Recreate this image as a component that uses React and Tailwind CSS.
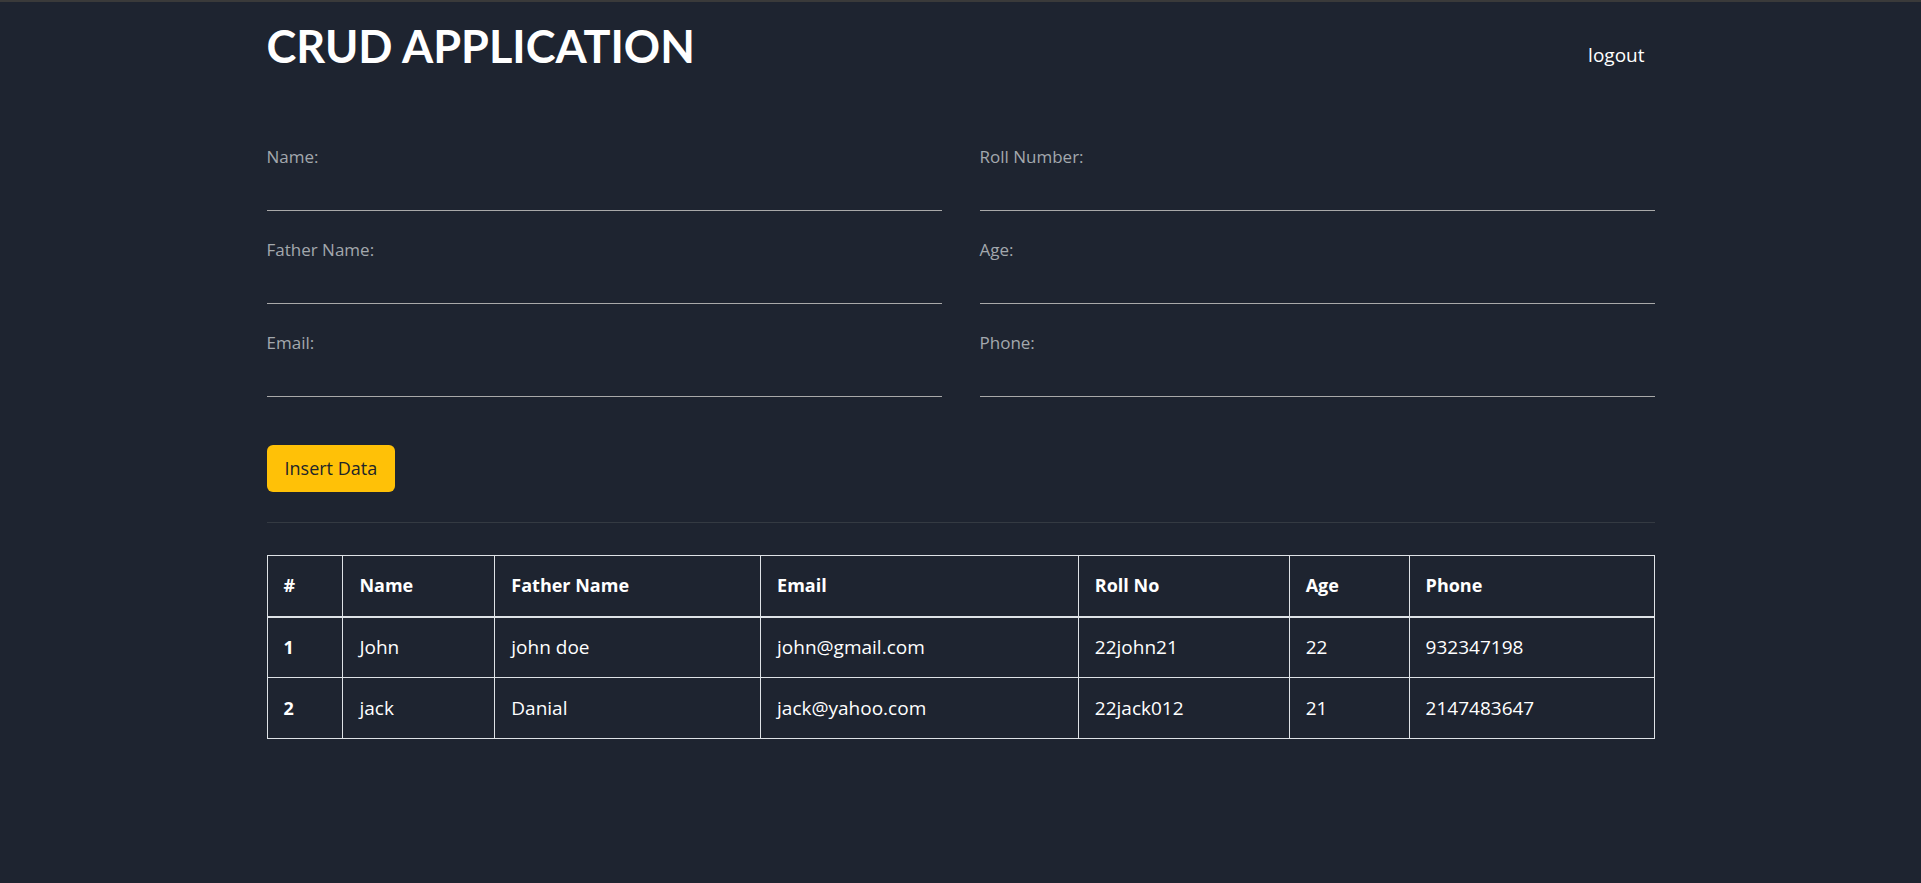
const fields = [
    ["Name:", "Roll Number:"],
    ["Father Name:", "Age:"],
    ["Email:", "Phone:"],
];

const rows = [
    { id: 1, name: "John", father: "john doe", email: "john@gmail.com", roll: "22john21", age: "22", phone: "932347198" },
    { id: 2, name: "jack", father: "Danial", email: "jack@yahoo.com", roll: "22jack012", age: "21", phone: "2147483647" },
];

const Field = ({ label }) => {
    return (
        <div>
            <label className="block text-[17px] leading-[24px] text-[#a3a8ad]">{label}</label>
            <input className="block w-full h-[42px] bg-transparent border-b border-[#a9a9a9] outline-none text-white" />
        </div>
    );
};

const App = () => {
    return (
        <div className="min-h-screen bg-[#1e2430] text-white font-['Open_Sans',sans-serif]">
            <div className="h-[2px] bg-[#3a3a3a]" />
            <div className="w-[1388px] mx-auto">
                <div className="flex justify-between items-baseline pt-[14px]">
                    <h1 className="font-['Lato',sans-serif] font-bold text-[45px] leading-[60px]">
                        CRUD APPLICATION
                    </h1>
                    <button className="text-[19px] pr-[10px] -translate-y-[1px]">logout</button>
                </div>

                <div className="grid grid-cols-2 gap-x-[38px] gap-y-[27px] mt-[69px]">
                    {fields.map(([a, b]) => (
                        <>
                            <Field key={a} label={a} />
                            <Field key={b} label={b} />
                        </>
                    ))}
                </div>

                <button className="mt-[48px] h-[47px] px-[18px] bg-[#ffc107] text-[#212529] text-[18px] rounded-[6px]">
                    Insert Data
                </button>

                <hr className="mt-[30px] border-t border-[#343a42]" />

                <table className="mt-[32px] w-full border-collapse text-[19px]">
                    <colgroup>
                        <col className="w-[76px]" />
                        <col className="w-[152px]" />
                        <col className="w-[266px]" />
                        <col className="w-[318px]" />
                        <col className="w-[211px]" />
                        <col className="w-[120px]" />
                        <col className="w-[245px]" />
                    </colgroup>
                    <thead>
                        <tr className="h-[61px] border-b-2 border-[#dee2e6]">
                            {["#", "Name", "Father Name", "Email", "Roll No", "Age", "Phone"].map((h) => (
                                <th key={h} className="border border-[#dee2e6] px-[16px] text-left font-bold text-[18px]">
                                    {h}
                                </th>
                            ))}
                        </tr>
                    </thead>
                    <tbody>
                        {rows.map((r) => (
                            <tr key={r.id} className="h-[61px]">
                                <th className="border border-[#dee2e6] px-[16px] text-left font-bold text-[18px]">{r.id}</th>
                                <td className="border border-[#dee2e6] px-[16px]">{r.name}</td>
                                <td className="border border-[#dee2e6] px-[16px]">{r.father}</td>
                                <td className="border border-[#dee2e6] px-[16px]">{r.email}</td>
                                <td className="border border-[#dee2e6] px-[16px]">{r.roll}</td>
                                <td className="border border-[#dee2e6] px-[16px]">{r.age}</td>
                                <td className="border border-[#dee2e6] px-[16px]">{r.phone}</td>
                            </tr>
                        ))}
                    </tbody>
                </table>
            </div>
        </div>
    );
};

export default App;
